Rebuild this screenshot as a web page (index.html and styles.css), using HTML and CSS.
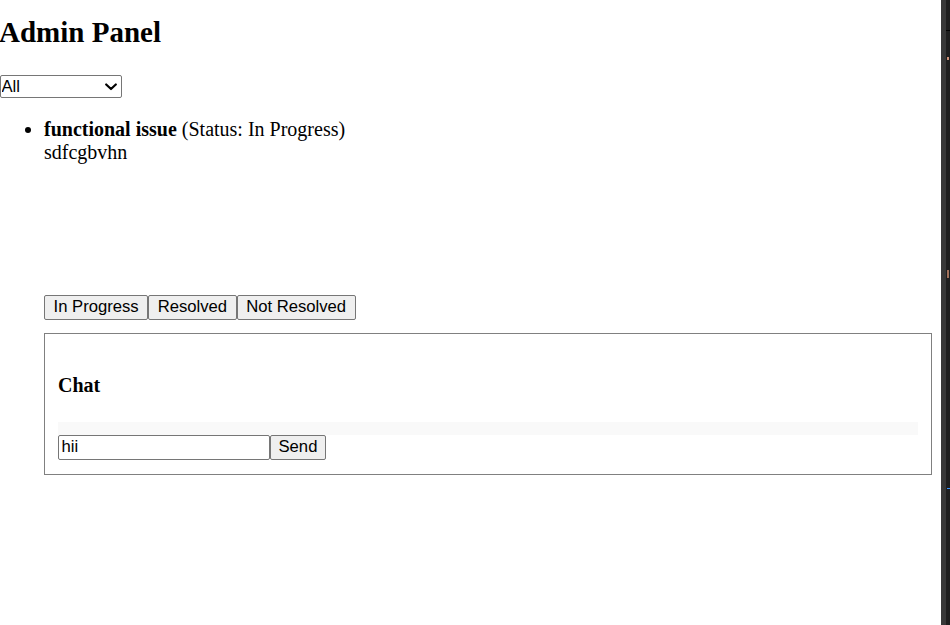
FILE: index.html
```html
<!DOCTYPE html>
<html lang="en">
<head>
<meta charset="utf-8">
<title>Admin Panel</title>
<link rel="stylesheet" href="styles.css">
</head>
<body>
<main class="app">
  <h1 class="title">Admin Panel</h1>
  <div class="filter-wrap">
    <select class="filter">
      <option>All</option>
      <option>In Progress</option>
      <option>Resolved</option>
      <option>Not Resolved</option>
    </select>
    <svg class="chevron" width="12" height="8" viewBox="0 0 12 8" aria-hidden="true">
      <polyline points="1.2,1.5 6,6 10.8,1.5" fill="none" stroke="#000" stroke-width="2.2" stroke-linecap="round" stroke-linejoin="round"/>
    </svg>
  </div>
  <ul class="issues">
    <li class="issue">
      <div class="issue-head"><strong>functional issue</strong> (Status: In Progress)</div>
      <div class="issue-desc">sdfcgbvhn</div>
      <div class="attachment"></div>
      <div class="actions">
        <button class="btn">In Progress</button><button class="btn">Resolved</button><button class="btn">Not Resolved</button>
      </div>
      <section class="chat">
        <h4 class="chat-title">Chat</h4>
        <div class="messages"></div>
        <div class="composer">
          <input class="chat-input" type="text" value="hii"><button class="btn send">Send</button>
        </div>
      </section>
    </li>
  </ul>
</main>
<aside class="side">
  <span class="mark m1"></span>
  <span class="mark m2"></span>
  <span class="mark m3"></span>
  <span class="mark m4"></span>
</aside>
</body>
</html>
```
FILE: styles.css
```css
html, body {
  margin: 0;
  height: 100%;
}

body {
  display: flex;
  background: #ffffff;
  color: #000;
  font-family: "Liberation Serif", "Times New Roman", serif;
  font-size: 20px;
  overflow: hidden;
}

.app {
  flex: 0 0 941px;
  box-sizing: border-box;
  padding: 16px 9px 0 0;
}

.title {
  font-size: 29px;
  font-weight: bold;
  margin: 0 0 25.7px -1px;
}

.filter-wrap {
  position: relative;
  width: 122px;
  height: 23px;
}

.filter {
  display: block;
  box-sizing: border-box;
  width: 122px;
  height: 23px;
  margin: 0;
  padding: 0 0 0 0.5px;
  -webkit-appearance: none;
  appearance: none;
  font-family: "Liberation Sans", Arial, sans-serif;
  font-size: 16.67px;
  color: #000;
  background: #fff;
  border: 1px solid #767676;
  border-radius: 2px;
}

.chevron {
  position: absolute;
  left: 105px;
  top: 8px;
  pointer-events: none;
}

.issues {
  margin: 20px 0 0;
  padding-left: 44px;
}

.attachment {
  height: 131px;
}

.actions {
  display: flex;
}

.btn {
  box-sizing: border-box;
  height: 25px;
  margin: 0;
  padding: 0 8.5px;
  font-family: "Liberation Sans", Arial, sans-serif;
  font-size: 16.67px;
  color: #000;
  background: #efefef;
  border: 1px solid #767676;
  border-radius: 2px;
}

.send {
  padding: 0 7.5px;
}

.chat {
  margin-top: 13px;
  border: 1px solid #808080;
  padding: 12.5px 13px 14.5px;
}

.chat-title {
  font-size: 20px;
  font-weight: bold;
  margin: 27.6px 0 25.5px;
}

.messages {
  height: 12.5px;
  background: #f9f9f9;
}

.composer {
  display: flex;
}

.chat-input {
  box-sizing: border-box;
  width: 212px;
  height: 25px;
  margin: 0;
  padding: 0 2.5px;
  font-family: "Liberation Sans", Arial, sans-serif;
  font-size: 16.67px;
  color: #000;
  border: 1px solid #767676;
  border-radius: 2px;
}

.side {
  flex: 1;
  display: flex;
  flex-direction: column;
  background: #1e1e1e;
  border-left: 5px solid #383838;
}

.mark {
  display: block;
  width: 2px;
  margin-left: 1px;
}

.m1 { height: 1px; margin-top: 30px; background: #000; width: 4px; margin-left: 0; }
.m2 { height: 3px; margin-top: 26px; background: #ce9178; }
.m3 { height: 8px; margin-top: 210px; background: #a0705a; }
.m4 { height: 1px; margin-top: 210px; background: #3794ff; width: 4px; }
```
